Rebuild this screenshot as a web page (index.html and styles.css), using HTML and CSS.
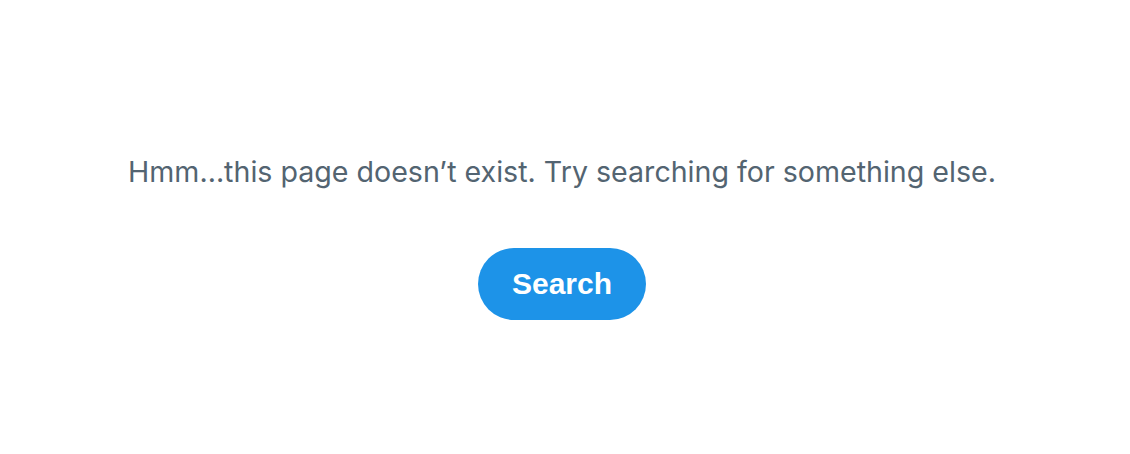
FILE: index.html
```html
<!DOCTYPE html>
<html>
<head>
  <meta charset="utf-8">
  <link rel="stylesheet" href="styles.css">
</head>
<body>
  <div class="empty-state">
    <div class="message">Hmm...this page doesn’t exist. Try searching for something else.</div>
    <button class="search-btn">Search</button>
  </div>
</body>
</html>
```

FILE: styles.css
```css
body {
  margin: 0;
  background: #ffffff;
  font-family: Inter, "Noto Sans", sans-serif;
}

.empty-state {
  display: flex;
  flex-direction: column;
  align-items: center;
  padding-top: 152px;
  padding-right: 6px;
}

.message {
  font-size: 28.6px;
  line-height: 40px;
  color: #536471;
}

.search-btn {
  margin-top: 56px;
  width: 168px;
  height: 72px;
  border: none;
  border-radius: 36px;
  background: #1d93e8;
  color: white;
  font-family: "Liberation Sans", Arial, sans-serif;
  font-size: 30px;
  font-weight: 700;
  cursor: pointer;
}
```
